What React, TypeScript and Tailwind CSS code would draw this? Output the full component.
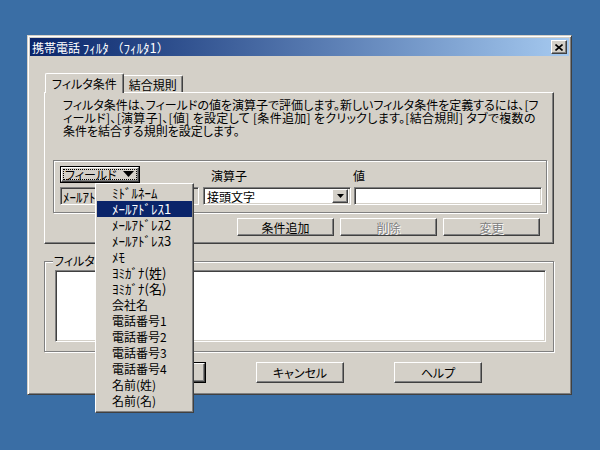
const raised =
  'border border-t-white border-l-white border-r-[#404040] border-b-[#404040] shadow-[inset_-1px_-1px_0_#808080,inset_1px_1px_0_#d4d0c8]';
const sunken =
  'border border-t-[#808080] border-l-[#808080] border-r-white border-b-white shadow-[inset_1px_1px_0_#404040,inset_-1px_-1px_0_#d4d0c8]';
const etched = 'border border-[#808080] shadow-[inset_1px_1px_0_#fff,1px_1px_0_#fff]';

// half-width kana items are drawn a point larger, as the bitmap font shows them
const fieldItems = [
  { label: 'ﾐﾄﾞﾙﾈｰﾑ', half: true },
  { label: 'ﾒｰﾙｱﾄﾞﾚｽ1', half: true },
  { label: 'ﾒｰﾙｱﾄﾞﾚｽ2', half: true },
  { label: 'ﾒｰﾙｱﾄﾞﾚｽ3', half: true },
  { label: 'ﾒﾓ', half: true },
  { label: 'ﾖﾐｶﾞﾅ(姓)', half: true },
  { label: 'ﾖﾐｶﾞﾅ(名)', half: true },
  { label: '会社名', half: false },
  { label: '電話番号1', half: false },
  { label: '電話番号2', half: false },
  { label: '電話番号3', half: false },
  { label: '電話番号4', half: false },
  { label: '名前(姓)', half: false },
  { label: '名前(名)', half: false },
];

function Arrow({ size = 'small' }: { size?: 'small' | 'big' }) {
  return size === 'big' ? (
    <svg width="11" height="7" viewBox="0 0 11 7" aria-hidden>
      <path d="M0 0H11L5.5 6Z" fill="#000" />
    </svg>
  ) : (
    <svg width="7" height="4" viewBox="0 0 7 4" aria-hidden>
      <path d="M0 0H7L3.5 4Z" fill="#000" />
    </svg>
  );
}

function Button({
  label,
  disabled = false,
  className = '',
}: {
  label: string;
  disabled?: boolean;
  className?: string;
}) {
  return (
    <div
      className={`flex items-center justify-center ${raised} ${className} ${
        disabled ? 'text-[#808080] [text-shadow:1px_1px_0_#fff]' : 'text-black'
      }`}
    >
      {label}
    </div>
  );
}

function FieldMenu() {
  return (
    <div
      className={`absolute left-[95px] top-[183px] w-[99px] bg-[#d4d0c8] p-px pb-[3px] ${raised}`}
    >
      {fieldItems.map((item, i) => (
        <div
          key={item.label}
          className={`h-4 leading-4 pl-[15px] whitespace-nowrap ${item.half ? 'text-[13px]' : ''} ${
            i === 1 ? 'bg-[#0a246a] text-white' : 'text-black'
          }`}
        >
          {item.label}
        </div>
      ))}
    </div>
  );
}

export default function App() {
  return (
    <div
      className="relative h-[450px] w-[600px] overflow-hidden bg-[#3a6ea5] pl-[27px] pt-[35px] text-[12px] leading-[13px] text-black [font-family:'Noto_Sans_CJK_JP',sans-serif] [font-feature-settings:'palt']"
    >
      {/* dialog */}
      <div
        className={`flex h-[360px] w-[545px] flex-col bg-[#d4d0c8] p-[2px] border border-t-[#d4d0c8] border-l-[#d4d0c8] border-r-[#404040] border-b-[#404040] shadow-[inset_1px_1px_0_#fff,inset_-1px_-1px_0_#808080]`}
      >
        {/* title bar */}
        <div className="flex h-[18px] items-center justify-between bg-gradient-to-r from-[#0a246a] to-[#a6caf0] pl-[2px] pr-[2px]">
          <span className="text-white whitespace-nowrap [font-feature-settings:normal]">
            携帯電話 <span className="text-[13px]">ﾌｨﾙﾀ</span> （<span className="text-[13px]">ﾌｨﾙﾀ1</span>）
          </span>
          <div className={`flex h-[14px] w-4 items-center justify-center bg-[#d4d0c8] ${raised}`}>
            <svg width="8" height="7" viewBox="0 0 8 7" aria-hidden>
              <path d="M0.5 0.5L7.5 6.5M7.5 0.5L0.5 6.5" stroke="#000" strokeWidth="1.6" />
            </svg>
          </div>
        </div>

        <div className="flex flex-1 flex-col pl-[14px]">
          {/* tabs */}
          <div className="mt-[17px] flex h-[19px] items-end pl-px">
            <div className="relative z-10 -mb-px flex h-[20px] items-center bg-[#d4d0c8] px-[6px] border-l border-t border-white border-r-[#404040] border-r shadow-[inset_-1px_0_0_#808080] rounded-t-[2px]">
              フィルタ条件
            </div>
            <div className="flex h-[17px] items-center px-[5px] border-t border-white border-r border-r-[#404040] shadow-[inset_-1px_0_0_#808080] rounded-tr-[2px]">
              結合規則
            </div>
          </div>

          {/* tab panel */}
          <div className="flex h-[152px] w-[510px] flex-col border border-t-white border-l-white border-r-[#404040] border-b-[#404040] shadow-[inset_-1px_-1px_0_#808080]">
            <div className="pl-[18px] pt-[5px] whitespace-nowrap">
              <div>フィルタ条件は、フィールドの値を演算子で評価します。新しいフィルタ条件を定義するには、[フ</div>
              <div className="tracking-[0.3px]">ィールド]、[演算子]、[値] を設定して [条件追加] をクリックします。[結合規則] タブで複数の</div>
              <div>条件を結合する規則を設定します。</div>
            </div>

            <div className={`ml-[8px] mt-[23px] h-[53px] w-[494px] pl-[6px] pt-[5px] ${etched}`}>
              <div className="flex h-[17px] items-end">
                <div className="flex h-[17px] w-[80px] items-center border border-black">
                  <div className={`flex h-full w-full items-center p-px ${raised}`}>
                    <div className="flex h-full w-full items-center gap-[6px] border border-dotted border-black pl-[1px]">
                      <span>フィールド</span>
                      <Arrow size="big" />
                    </div>
                  </div>
                </div>
                <span className="ml-[71px] leading-[14px]">演算子</span>
                <span className="ml-[106px] leading-[14px]">値</span>
              </div>
              <div className="mt-[4px] flex h-[18px] gap-[4px]">
                <div className={`flex w-[139px] items-center bg-[#d4d0c8] pl-[2px] ${sunken}`}>
                  <span className="whitespace-nowrap text-[13px]">ﾒｰﾙｱﾄﾞﾚｽ1</span>
                </div>
                <div className={`flex w-[148px] items-center justify-between bg-white p-[2px] pl-[3px] ${sunken}`}>
                  <span>接頭文字</span>
                  <div className={`flex h-[14px] w-4 items-center justify-center bg-[#d4d0c8] ${raised}`}>
                    <Arrow />
                  </div>
                </div>
                <div className={`-ml-px w-[188px] bg-white ${sunken}`} />
              </div>
            </div>

            <div className="mr-[13px] mt-[5px] flex justify-end gap-[6px]">
              <Button label="条件追加" className="h-[18px] w-[97px]" />
              <Button label="削除" disabled className="h-[18px] w-[97px]" />
              <Button label="変更" disabled className="h-[18px] w-[97px]" />
            </div>
          </div>

          {/* list group */}
          <div className={`relative mt-[17px] h-[91px] w-[510px] pl-[10px] pr-[7px] pt-[8px] pb-[9px] ${etched}`}>
            <span className="absolute left-[8px] top-[-8px] bg-[#d4d0c8] px-px">フィルタ条件</span>
            <div className={`h-full w-full bg-white ${sunken}`} />
          </div>

          {/* bottom buttons */}
          <div className="ml-[74px] mt-[10px] flex gap-[50px]">
            <div className="h-[21px] w-[88px] border border-black">
              <Button label="OK" className="h-full w-full" />
            </div>
            <Button label="キャンセル" className="h-[21px] w-[88px]" />
            <Button label="ヘルプ" className="h-[21px] w-[88px]" />
          </div>
        </div>
      </div>

      <FieldMenu />
    </div>
  );
}
